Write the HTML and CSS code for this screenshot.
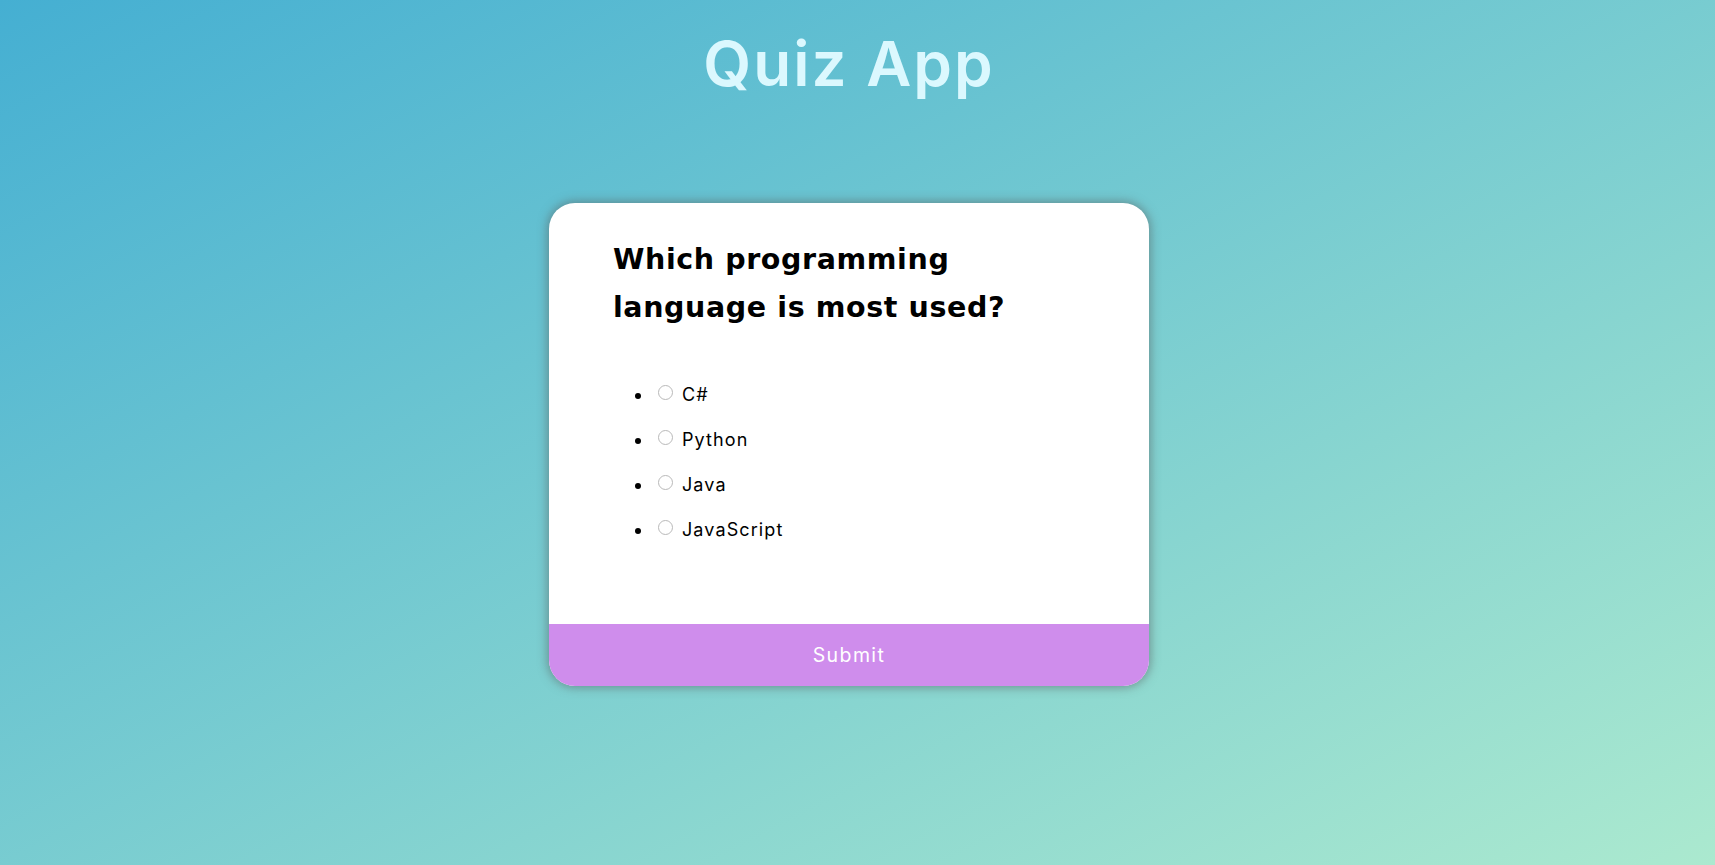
FILE: index.html
```html
<!DOCTYPE html>
<html lang="en">
<head>
<meta charset="utf-8">
<title>Quiz App</title>
<link rel="stylesheet" href="styles.css">
</head>
<body>
<div class="page">
  <h1 class="title">Quiz App</h1>
  <div class="quiz">
    <div class="quiz-header">
      <h2 class="question">Which programming language is most used?</h2>
      <ul class="answers">
        <li><label><input type="radio" name="answer" class="radio"><span>C#</span></label></li>
        <li><label><input type="radio" name="answer" class="radio"><span>Python</span></label></li>
        <li><label><input type="radio" name="answer" class="radio"><span>Java</span></label></li>
        <li><label><input type="radio" name="answer" class="radio"><span>JavaScript</span></label></li>
      </ul>
    </div>
    <button class="submit" type="button">Submit</button>
  </div>
</div>
</body>
</html>
```

FILE: styles.css
```css
html, body {
  margin: 0;
  padding: 0;
  height: 100%;
}

body {
  font-family: Inter, "Noto Sans", sans-serif;
  background: linear-gradient(to bottom right, #45afd2, #abe9cf);
  overflow: hidden;
}

.page {
  box-sizing: border-box;
  height: 100vh;
  padding-right: 17px;
  display: flex;
  flex-direction: column;
  align-items: center;
}

.title {
  margin: 33px 0 0;
  font-size: 62px;
  line-height: 62px;
  font-weight: 600;
  color: #dbf8fe;
  letter-spacing: 2px;
}

.quiz {
  margin-top: 108px;
  width: 600px;
  background: #fff;
  border-radius: 26px;
  overflow: hidden;
  box-shadow: 0 0 10px 2px rgba(90, 100, 100, 0.55);
}

.quiz-header {
  padding: 33px 64px 80px;
}

.question {
  margin: 0 0 48px;
  font-family: "DejaVu Sans", Inter, sans-serif;
  font-size: 28.5px;
  line-height: 48px;
  font-weight: 700;
  letter-spacing: 0.6px;
  color: #000;
  padding-right: 20px;
}

.answers {
  margin: 0;
  padding: 0 0 0 40px;
  list-style: disc;
}

.answers li {
  font-size: 18px;
  line-height: 29px;
  margin: 0 0 16px;
  letter-spacing: 1.1px;
  color: #000;
}

.answers li:last-child {
  margin-bottom: 0;
}

.radio {
  appearance: none;
  -webkit-appearance: none;
  box-sizing: border-box;
  width: 15px;
  height: 15px;
  margin: 0 9px 0 5px;
  border: 1px solid #b9b9b9;
  border-radius: 50%;
  background: #fff;
  vertical-align: 1px;
}

.submit {
  display: block;
  width: 100%;
  height: 62px;
  border: none;
  background: #cf8dec;
  color: #fff;
  font-family: Inter, "Noto Sans", sans-serif;
  font-size: 19.5px;
  letter-spacing: 1.4px;
  padding: 0;
}
```
